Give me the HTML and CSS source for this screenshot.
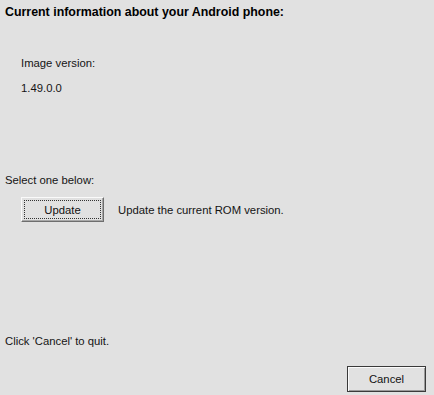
FILE: index.html
```html
<!DOCTYPE html>
<html>
<head>
<meta charset="utf-8">
<link rel="stylesheet" href="styles.css">
</head>
<body>
<div class="dialog">
  <div class="title">Current information about your Android phone:</div>
  <div class="info">
    <div class="label">Image version:</div>
    <div class="value">1.49.0.0</div>
  </div>
  <div class="select">Select one below:</div>
  <div class="option">
    <button class="btn update"><span class="focus">Update</span></button>
    <span class="desc">Update the current ROM version.</span>
  </div>
  <div class="spacer"></div>
  <div class="quit">Click 'Cancel' to quit.</div>
  <div class="footer">
    <button class="btn cancel">Cancel</button>
  </div>
</div>
</body>
</html>
```
FILE: styles.css
```css
html, body {
  margin: 0;
  padding: 0;
  background: #e1e1e1;
}
.dialog {
  width: 434px;
  height: 395px;
  box-sizing: border-box;
  display: flex;
  flex-direction: column;
  font-family: "Liberation Sans", Arial, sans-serif;
  font-size: 11.3px;
  color: #141414;
  padding: 4px 8px 3px 5px;
}
.title {
  font-weight: bold;
  font-size: 12.4px;
  color: #000;
  line-height: 16px;
}
.info {
  padding-left: 16px;
  margin-top: 36px;
}
.label { line-height: 14px; }
.value { line-height: 14px; margin-top: 11px; }
.select {
  margin-top: 78px;
  line-height: 14px;
}
.option {
  display: flex;
  align-items: center;
  margin-top: 10px;
  padding-left: 16px;
}
.btn {
  font-family: "Liberation Sans", Arial, sans-serif;
  font-size: 11.3px;
  color: #111;
  background: #e1e1e1;
  padding: 0;
  margin: 0;
}
.update {
  width: 83px;
  height: 25px;
  border: 1px solid;
  border-color: #fafafa #6e6e6e #6e6e6e #fafafa;
  box-shadow: inset -1px -1px 0 #a8a8a8;
  padding: 2px;
}
.focus {
  display: flex;
  align-items: center;
  justify-content: center;
  height: 100%;
  box-sizing: border-box;
  border: 1px dotted #333;
}
.desc {
  margin-left: 14px;
}
.spacer { flex: 1; }
.quit {
  line-height: 14px;
  margin-bottom: 18px;
}
.footer {
  display: flex;
  justify-content: flex-end;
}
.cancel {
  width: 79px;
  height: 26px;
  border: 1px solid #3a3a3a;
  box-shadow: inset 1px 1px 0 #fbfbfb, inset -1px -1px 0 #9a9a9a;
}
```
